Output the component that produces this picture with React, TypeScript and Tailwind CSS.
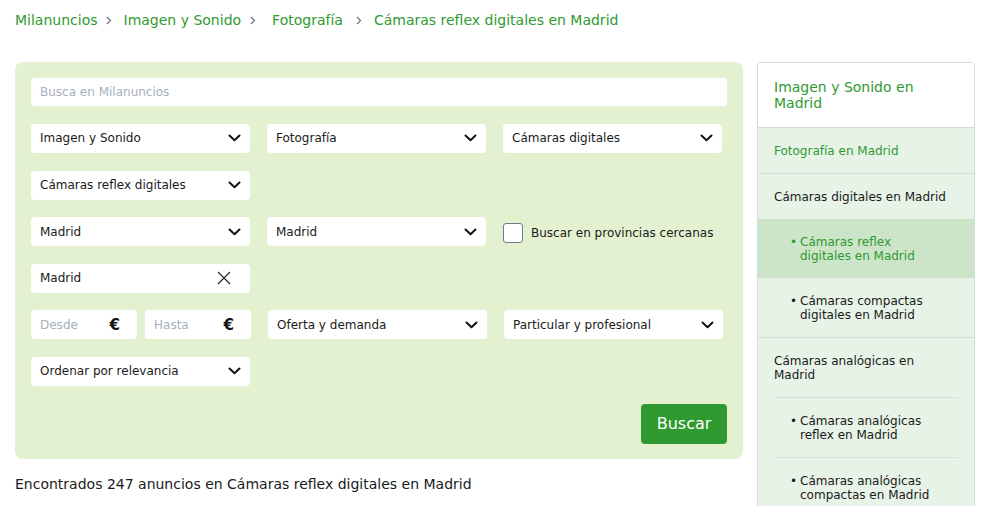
import React from 'react'

const font = { fontFamily: '"DejaVu Sans", Verdana, sans-serif' }

function Chevron() {
  return (
    <svg width="13" height="8" viewBox="0 0 13 8" className="shrink-0">
      <path d="M1.5 1.5 L6.5 6.2 L11.5 1.5" fill="none" stroke="#111" strokeWidth="2" strokeLinecap="round" strokeLinejoin="round" />
    </svg>
  )
}

function Sep({ wide }: { wide?: boolean }) {
  return (
    <svg width="6" height="9" viewBox="0 0 6 9" className={wide ? 'ml-[9px] mr-[16px]' : 'ml-[8px] mr-[12px]'}>
      <path d="M1 1 L4.5 4.5 L1 8" fill="none" stroke="#6f7a86" strokeWidth="1.3" />
    </svg>
  )
}

function Select({ label }: { label: string }) {
  return (
    <div className="w-[219px] h-[29px] bg-white rounded-[4px] flex items-center justify-between pl-[9px] pr-[9px] text-[12px] text-[#1a1a1a]">
      <span>{label}</span>
      <Chevron />
    </div>
  )
}

function Price({ label }: { label: string }) {
  return (
    <div className="w-[106px] h-[29px] bg-white rounded-[4px] flex items-center justify-between pl-[9px] pr-[17px] text-[12px]">
      <span className="text-[#a7b0b9]">{label}</span>
      <span className="text-[15px] font-bold text-[#111]">€</span>
    </div>
  )
}

type Item = { text: string; green?: boolean; active?: boolean }

function SubItem({ text, green, active, line }: Item & { line?: boolean }) {
  return (
    <div className={active ? 'bg-[#cce5c9]' : ''}>
      <div className={`mx-4 ${line ? 'border-t border-[#d6dde0]' : ''}`}>
        <div className={`flex py-[15.5px] pl-4 pr-4 leading-[14px] ${green ? 'text-[#2f9a30]' : 'text-[#1a1a1a]'}`}>
          <span className="w-[10px] shrink-0">•</span>
          <span>{text}</span>
        </div>
      </div>
    </div>
  )
}

export default function App() {
  return (
    <div style={font} className="w-[992px] h-[506px] overflow-hidden bg-white text-[#1a1a1a]">
      {/* breadcrumb */}
      <nav className="h-[40px] pl-[15px] flex items-center text-[14px] text-[#2f9a30]">
        <a>Milanuncios</a>
        <Sep />
        <a>Imagen y Sonido</a>
        <Sep wide />
        <a className="pr-[5px]">Fotografía</a>
        <Sep />
        <a>Cámaras reflex digitales en Madrid</a>
      </nav>

      <div className="flex items-start pl-[15px] pt-[22px] gap-[14px]">
        {/* left column */}
        <div className="w-[728px] shrink-0">
          <div className="bg-[#e3f1d1] rounded-[8px] p-4 pb-[15px] flex flex-col gap-[17.6px]">
            <div className="h-[28.4px] bg-white rounded-[4px] flex items-center pl-[9px] text-[12px] text-[#a7b0b9]">
              Busca en Milanuncios
            </div>
            <div className="flex gap-[17px]">
              <Select label="Imagen y Sonido" />
              <Select label="Fotografía" />
              <Select label="Cámaras digitales" />
            </div>
            <div className="flex gap-[17px]">
              <Select label="Cámaras reflex digitales" />
            </div>
            <div className="flex gap-[17px] items-start">
              <Select label="Madrid" />
              <Select label="Madrid" />
              <label className="flex items-center gap-2 mt-[6px] text-[12px]">
                <span className="w-[20px] h-[20px] bg-white border border-[#6e7d8c] rounded-[3px]" />
                Buscar en provincias cercanas
              </label>
            </div>
            <div className="flex">
              <div className="w-[219px] h-[29px] bg-white rounded-[4px] flex items-center justify-between pl-[9px] pr-[19px] text-[12px]">
                <span>Madrid</span>
                <svg width="14" height="14" viewBox="0 0 14 14">
                  <path d="M1 1 L13 13 M13 1 L1 13" stroke="#222" strokeWidth="1.1" />
                </svg>
              </div>
            </div>
            <div className="flex gap-[17px]">
              <div className="flex gap-[8px]">
                <Price label="Desde" />
                <Price label="Hasta" />
              </div>
              <Select label="Oferta y demanda" />
              <Select label="Particular y profesional" />
            </div>
            <div className="flex">
              <Select label="Ordenar por relevancia" />
            </div>
            <div className="flex justify-end">
              <button className="w-[86px] h-[40px] bg-[#2f9a30] text-white text-[16px] rounded-[4px]">
                Buscar
              </button>
            </div>
          </div>
          <p className="mt-[15px] text-[14px] text-[#1a1a1a]">
            Encontrados 247 anuncios en Cámaras reflex digitales en Madrid
          </p>
        </div>

        {/* sidebar */}
        <aside className="w-[218px] shrink-0 border border-[#d3dcdc] rounded-t-[4px] text-[12px] overflow-hidden">
          <div className="bg-white px-4 py-4 text-[14px] leading-[16px] text-[#2f9a30] border-b border-[#d3dcdc]">
            Imagen y Sonido en Madrid
          </div>
          <div className="bg-[#e8f3e8]">
            <div className="px-4 py-[15.5px] leading-[14px] text-[#2f9a30] border-b border-[#d3dcdc]">
              Fotografía en Madrid
            </div>
            <div className="border-b border-[#d3dcdc]">
              <div className="px-4 py-[15.5px] leading-[14px]">Cámaras digitales en Madrid</div>
              <SubItem text="Cámaras reflex digitales en Madrid" green active />
              <SubItem text="Cámaras compactas digitales en Madrid" />
            </div>
            <div>
              <div className="px-4 py-[15.5px] leading-[14px]">Cámaras analógicas en Madrid</div>
              <SubItem text="Cámaras analógicas reflex en Madrid" line />
              <SubItem text="Cámaras analógicas compactas en Madrid" line />
            </div>
          </div>
        </aside>
      </div>
    </div>
  )
}
